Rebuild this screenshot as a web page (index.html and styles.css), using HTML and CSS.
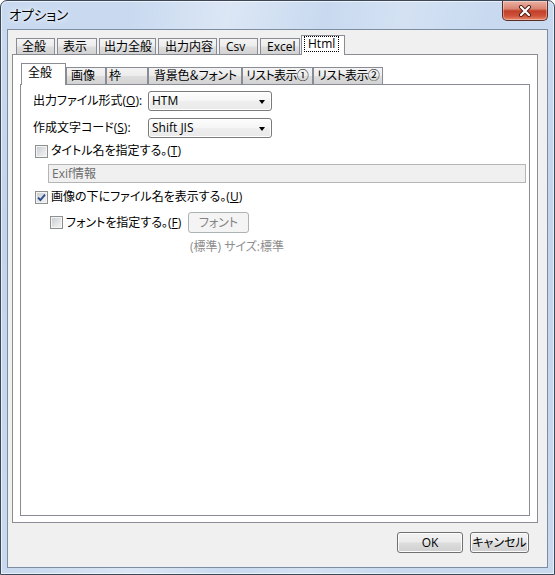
FILE: index.html
```html
<!DOCTYPE html>
<html lang="ja">
<head>
<meta charset="utf-8">
<title>オプション</title>
<link rel="stylesheet" href="styles.css">
</head>
<body>
<div class="window">
  <div class="titlebar">
    <span class="title">オプション</span>
    <div class="close">
      <svg width="14" height="12" viewBox="0 0 14 12">
        <path d="M3 2 L11 10 M11 2 L3 10" stroke="#4a1c15" stroke-width="4" stroke-linecap="round"/>
        <path d="M3 2 L11 10 M11 2 L3 10" stroke="#ffffff" stroke-width="2.2" stroke-linecap="round"/>
      </svg>
    </div>
  </div>
  <div class="client">
    <div class="tabctl">
      <div class="tabrow outer-row">
        <div class="tab o1">全般</div>
        <div class="tab o2">表示</div>
        <div class="tab o3">出力全般</div>
        <div class="tab o4">出力内容</div>
        <div class="tab o5">Csv</div>
        <div class="tab o6">Excel</div>
        <div class="tab sel o7"><span class="focus">Html</span></div>
      </div>
      <div class="panel outer-panel">
        <div class="tabrow inner-row">
          <div class="tab sel i1">全般</div>
          <div class="tab i2">画像</div>
          <div class="tab i3">枠</div>
          <div class="tab i4">背景色＆フォント</div>
          <div class="tab i5">リスト表示①</div>
          <div class="tab i6">リスト表示②</div>
        </div>
        <div class="panel pane">
          <div class="field">
            <span class="field-label">出力ファイル形式(<u>O</u>):</span>
            <div class="combo"><span>HTM</span><span class="arrow"></span></div>
          </div>
          <div class="field">
            <span class="field-label">作成文字コード(<u>S</u>):</span>
            <div class="combo"><span>Shift JIS</span><span class="arrow"></span></div>
          </div>
          <div class="check c1">
            <span class="cb"></span>
            <span>タイトル名を指定する。(<u>T</u>)</span>
          </div>
          <div class="textbox">Exif情報</div>
          <div class="check c2">
            <span class="cb">
              <svg width="9" height="9" viewBox="0 0 9 9"><path d="M1 4.6 L3.4 7 L8 1.6" fill="none" stroke="#2d4d8c" stroke-width="1.9"/></svg>
            </span>
            <span>画像の下にファイル名を表示する。(<u>U</u>)</span>
          </div>
          <div class="sub">
            <div class="check c3">
              <span class="cb"></span>
              <span>フォントを指定する。(<u>F</u>)</span>
            </div>
            <div class="btn disabled">フォント</div>
          </div>
          <div class="note">(標準) サイズ:標準</div>
        </div>
      </div>
    </div>
    <div class="buttons">
      <div class="btn ok">OK</div>
      <div class="btn cancel">キャンセル</div>
    </div>
  </div>
</div>
</body>
</html>
```
FILE: styles.css
```css
* { box-sizing: border-box; }
html, body { margin: 0; padding: 0; }
body {
  width: 555px;
  height: 575px;
  overflow: hidden;
  background: #ffffff;
  font-family: "Open Sans", "Noto Sans CJK JP", sans-serif;
  font-size: 12px;
  line-height: 16px;
  color: #000;
  font-feature-settings: "palt";
}
u { text-decoration: underline; text-underline-offset: 1px; }

.window {
  width: 555px;
  height: 575px;
  border: 1px solid #3c4858;
  border-radius: 7px 7px 0 0;
  background:
    linear-gradient(100deg, rgba(255,255,255,0) 20%, rgba(255,255,255,0.35) 35%, rgba(255,255,255,0) 50%, rgba(255,255,255,0.2) 62%, rgba(255,255,255,0) 75%),
    linear-gradient(180deg, #c9daf0 0%, #c2d5ec 40%, #c9daef 100%);
  box-shadow: inset 0 0 0 1px rgba(255,255,255,0.6);
  display: flex;
  flex-direction: column;
}

.titlebar {
  height: 28px;
  flex: none;
  display: flex;
  justify-content: space-between;
  align-items: flex-start;
}
.title {
  padding-left: 8px;
  line-height: 29px;
  font-size: 13.5px;
  text-shadow: 0 0 6px #fff, 0 0 3px #fff;
}
.close {
  width: 46px;
  height: 20px;
  margin-right: 6px;
  border: 1px solid #5c2b24;
  border-top: none;
  border-radius: 0 0 5px 5px;
  background: linear-gradient(180deg, #eab2a5 0%, #d9836f 42%, #c23f2a 52%, #cf5139 78%, #e3886a 100%);
  box-shadow: inset 0 0 0 1px rgba(255,255,255,0.35);
  display: flex;
  align-items: center;
  justify-content: center;
}

.client {
  flex: 1;
  margin: 0 6px 6px;
  border: 1px solid #7d8ca0;
  background: #f0f0f0;
  padding: 5px 0 0 4px;
  display: flex;
  flex-direction: column;
}

.tabctl {
  width: 526px;
  display: flex;
  flex-direction: column;
}
.tabrow {
  display: flex;
  align-items: flex-end;
  position: relative;
  z-index: 1;
  flex: none;
}
.outer-row {
  height: 20px;
  margin-bottom: -1px;
  padding-left: 4px;
  gap: 2px;
}
.inner-row {
  height: 22px;
  margin-bottom: -1px;
  padding-left: 1px;
}
.tab {
  height: 16px;
  margin-bottom: 1px;
  border: 1px solid #898c95;
  border-bottom: none;
  background: linear-gradient(180deg, #f4f4f4 0%, #ececec 48%, #dedede 52%, #d2d2d2 100%);
  display: flex;
  align-items: center;
  padding-left: 5px;
  white-space: nowrap;
  overflow: hidden;
}
.tab.sel {
  background: #ffffff;
  margin-bottom: 0;
}
.outer-row .tab.sel { height: 20px; padding-bottom: 3px; }
.inner-row .tab { height: 17px; }
.inner-row .tab.sel { height: 22px; padding-bottom: 3px; }

.o1 { width: 39px; }
.o2 { width: 40px; }
.o3 { width: 57px; padding-left: 4px; }
.o4 { width: 59px; padding-left: 6px; }
.o5 { width: 39px; padding-left: 6px; }
.o6 { width: 40px; padding-left: 6px; }
.o7 { width: 44px; margin-left: -1px; padding-left: 2px; }
.focus {
  border: 1px dotted #000;
  padding: 0 3px;
  line-height: 14px;
}

.i1 { width: 45px; padding-left: 6px; }
.i2 { width: 40px; padding-left: 4px; }
.i3 { width: 42px; padding-left: 2px; }
.i4 { width: 94px; padding-left: 5px; letter-spacing: -0.3px; }
.i5 { width: 71px; padding-left: 3px; letter-spacing: -0.6px; }
.i6 { width: 70px; padding-left: 3px; letter-spacing: -0.6px; }

.panel {
  border: 1px solid #898c95;
  background: #ffffff;
}
.outer-panel {
  height: 469px;
  padding: 8px 7px 6px 7px;
  display: flex;
  flex-direction: column;
}
.pane {
  flex: 1;
  padding: 6px 0 0 12px;
  display: flex;
  flex-direction: column;
  align-items: flex-start;
}

.field {
  display: flex;
  align-items: center;
  height: 20px;
}
.field + .field { margin-top: 7px; }
.field-label { width: 115px; }
.combo {
  width: 124px;
  height: 20px;
  border: 1px solid #7a7a7a;
  border-radius: 3px;
  background: linear-gradient(180deg, #fdfdfd 0%, #f5f5f5 50%, #eeeeee 51%, #e9e9e9 100%);
  box-shadow: inset 0 0 0 1px #ffffff;
  display: flex;
  align-items: center;
  justify-content: space-between;
  padding: 0 6px 0 3px;
}
.arrow {
  width: 0;
  height: 0;
  border-left: 3.5px solid transparent;
  border-right: 3.5px solid transparent;
  border-top: 4px solid #000;
  margin-top: 1px;
}

.check {
  display: flex;
  align-items: center;
  height: 18px;
  gap: 3px;
  padding-left: 2px;
}
.c1 { margin-top: 4px; }
.c2 { margin-top: 5px; }
.cb {
  width: 13px;
  height: 13px;
  flex: none;
  border: 1px solid #8e8f8f;
  background: linear-gradient(135deg, #c6cacf 0%, #e4e6e8 60%, #f4f4f5 100%);
  box-shadow: inset 0 0 0 1px #f4f4f4;
  display: flex;
  align-items: center;
  justify-content: center;
}

.textbox {
  margin: 4px 0 0 15px;
  width: 478px;
  height: 19px;
  border: 1px solid #b5b5b5;
  background: #f0f0f0;
  color: #6d6d6d;
  padding-left: 3px;
  line-height: 17px;
}

.sub {
  display: flex;
  align-items: center;
  height: 21px;
  margin-top: 6px;
  padding-left: 17px;
}
.sub .check { width: 138px; padding-left: 0; }

.btn {
  display: flex;
  align-items: center;
  justify-content: center;
  border-radius: 3px;
}
.btn.disabled {
  width: 61px;
  height: 21px;
  border: 1px solid #adb2b5;
  background: #f4f4f4;
  color: #838383;
}
.note {
  margin: 6px 0 0 157px;
  color: #8d8d8d;
}

.buttons {
  display: flex;
  justify-content: flex-end;
  gap: 7px;
  margin-top: 9px;
  padding-right: 18px;
}
.ok, .cancel {
  height: 21px;
  border: 1px solid #707070;
  background: linear-gradient(180deg, #f2f2f2 0%, #ebebeb 48%, #dddddd 52%, #cfcfcf 100%);
  box-shadow: inset 0 0 0 1px #fcfcfc;
}
.ok { width: 66px; }
.cancel { width: 59px; }
```
